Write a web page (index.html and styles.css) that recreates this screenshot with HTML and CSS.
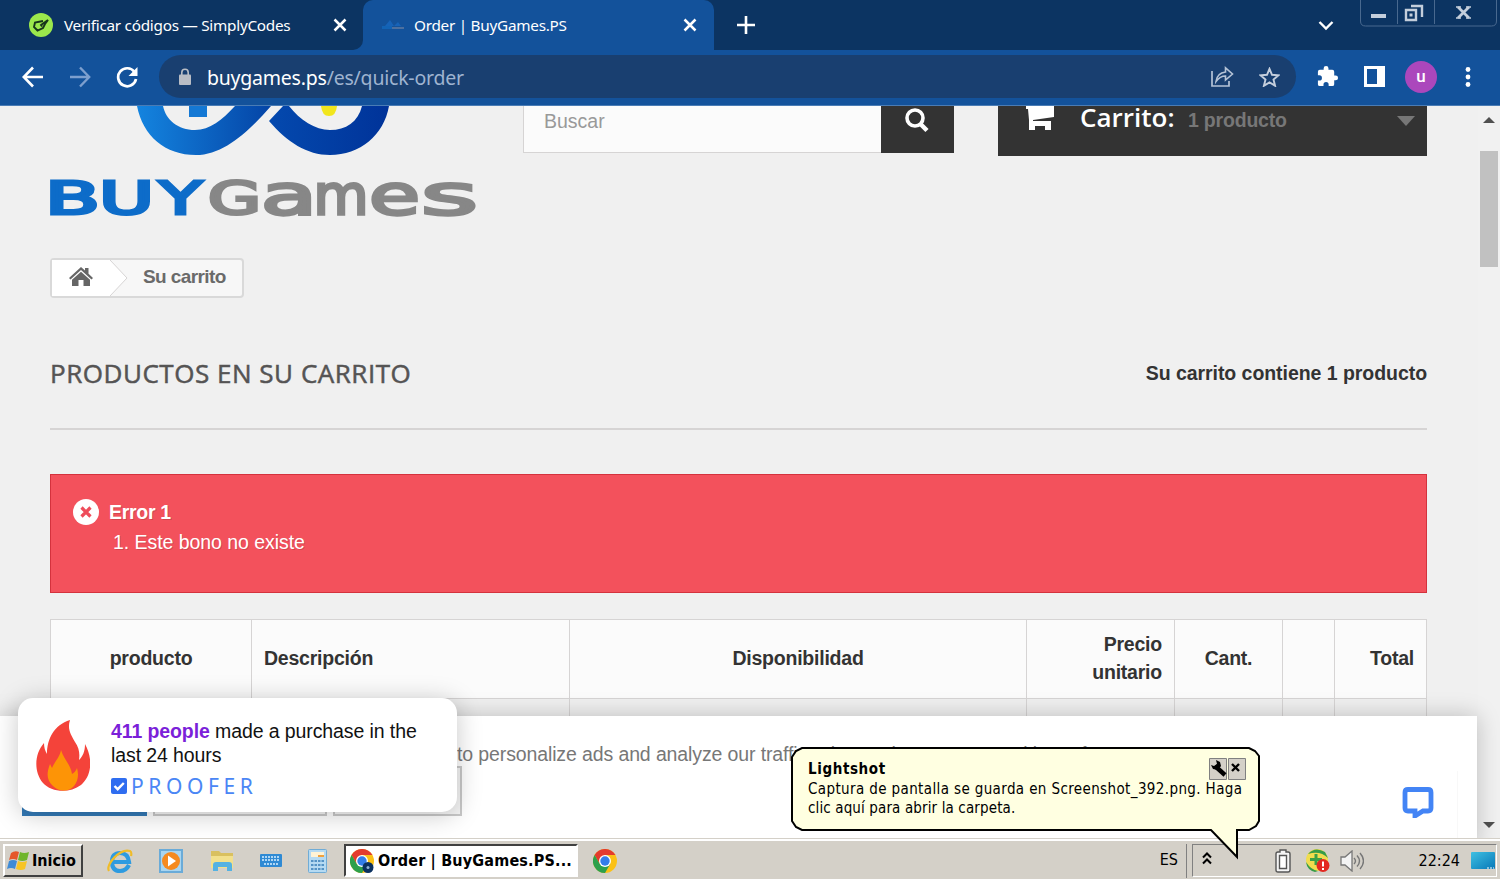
FILE: index.html
```
<!DOCTYPE html>
<html lang="es">
  <head>
    <meta charset="UTF-8" />
    <title>Order | BuyGames.PS</title>
    <link rel="stylesheet" href="styles.css">
  </head>
  <body>
    <div class="tabs">
      <div class="tab">
        <svg class="fav" width="24" height="24" viewBox="0 0 24 24"><circle cx="12" cy="12" r="12" fill="#9be84c"/><path d="M14 8 6 9.500 5 14l3.500 3.500L14 15l2-4 3-4-7 5 1 1.500" fill="none" stroke="#17351b" stroke-width="1.900"/></svg>
        <span class="tab-title t1">Verificar códigos — SimplyCodes</span>
        <svg class="x" width="14" height="14" viewBox="0 0 14 14"><path d="m1.500 1.500 11 11M12.500 1.500l-11 11" stroke="#fff" stroke-width="2.500"/></svg>
      </div>
      <div class="tab active">
        <svg class="fav" width="24" height="14" viewBox="0 0 24 14"><path d="m4 8 5-6 4 6 4-4 3 4z" fill="#1763b8"/><path d="M1 8h10v3H1z" fill="#1263b5"/><path d="M11 9h12v2H11z" fill="#4d709f"/></svg>
        <span class="tab-title t2">Order | BuyGames.PS</span>
        <svg class="x" width="14" height="14" viewBox="0 0 14 14"><path d="m1.500 1.500 11 11M12.500 1.500l-11 11" stroke="#fff" stroke-width="2.500"/></svg>
      </div>
      <svg class="plus" width="18" height="18" viewBox="0 0 18 18"><path d="M9 0v18M0 9h18" stroke="#fff" stroke-width="2.600"/></svg>
      <svg class="chev" width="16" height="12" viewBox="0 0 16 12"><path d="m1.500 3 6.500 6.500L14.500 3" fill="none" stroke="#fff" stroke-width="2.400"/></svg>
      <svg class="winbtns" width="137" height="27" viewBox="0 0 137 27">
        <path d="M.5 0v21q0 5 5 5h126q5 0 5-5V0M37.500 0v24M74.500 0v24" fill="none" stroke="#49698f"/>
        <path d="M11 14h15v4H11z" fill="#c4cedb"/>
        <path d="M51 6h11v11M46 10h10v10H46z" fill="none" stroke="#c4cedb" stroke-width="2.400"/><path d="M49.500 13.500h3v3h-3z" fill="#c4cedb"/>
        <path d="m98 7 11 11M109 7 98 18" stroke="#c4cedb" stroke-width="2.800"/><path d="M96 7h5M106 7h5M96 18h5M106 18h5" stroke="#c4cedb" stroke-width="1.500"/>
      </svg>
    </div>

    <div class="toolbar">
      <svg width="22" height="22" viewBox="0 0 22 22"><path d="M21 11H2M11 1.500 1.800 11l9.200 9.500" fill="none" stroke="#fff" stroke-width="2.600"/></svg>
      <svg class="fwd" width="22" height="22" viewBox="0 0 22 22"><path d="M1 11h19M11 1.500 20.200 11 11 20.500" fill="none" stroke="#7d9fce" stroke-width="2.400"/></svg>
      <svg class="reload" width="22" height="22" viewBox="0 0 22 22"><path d="M18.500 6A9 9 0 1 0 20 13" fill="none" stroke="#fff" stroke-width="2.700"/><path d="M21.500 1v9h-9z" fill="#fff"/></svg>
      <div class="omnibox">
        <svg width="12" height="18" viewBox="0 0 12 18"><path d="M2.800 8V4.500a3.200 3.200 0 0 1 6.400 0V8" fill="none" stroke="#b9bdc5" stroke-width="1.600"/><rect y="6.500" width="12" height="10.500" rx="1" fill="#b9bdc5"/></svg>
        <span class="url">buygames.ps<i>/es/quick-order</i></span>
        <svg class="share" width="23" height="21" viewBox="0 0 23 21"><path d="M1 5v15h17v-5" fill="none" stroke="#b5c3d6" stroke-width="1.700"/><path d="M5 15.500q1-8.500 9.500-9.500V1.800l7 6.200-7 6v-4Q9 10 5 15.500z" fill="none" stroke="#b5c3d6" stroke-width="1.600"/></svg>
        <svg width="21" height="20" viewBox="0 0 21 20"><path d="m10.500 1.800 2.500 6 6.500.5-5 4.200 1.600 6.300-5.600-3.400-5.600 3.400 1.600-6.300-5-4.200 6.500-.5z" fill="none" stroke="#c5cfdd" stroke-width="1.900"/></svg>
      </div>
      <svg class="puzzle" width="23" height="23" viewBox="0 0 24 24"><path d="M20.500 11H19V7a2 2 0 0 0-2-2h-4V3.500a2.500 2.500 0 0 0-5 0V5H4a2 2 0 0 0-2 2v3.800h1.500a2.700 2.700 0 0 1 0 5.400H2V20a2 2 0 0 0 2 2h3.800v-1.500a2.700 2.700 0 0 1 5.400 0V22H17a2 2 0 0 0 2-2v-4h1.500a2.500 2.500 0 0 0 0-5z" fill="#fff"/></svg>
      <svg class="panel" width="21" height="21" viewBox="0 0 21 21"><path d="M1.500 1.500h18v18h-18z" fill="none" stroke="#fff" stroke-width="3"/><path d="M13 2h7v17h-7z" fill="#fff"/></svg>
      <span class="avatar">u</span>
      <svg class="dots" width="6" height="20" viewBox="0 0 6 20"><circle cx="3" cy="2.500" r="2.400" fill="#fff"/><circle cx="3" cy="10" r="2.400" fill="#fff"/><circle cx="3" cy="17.500" r="2.400" fill="#fff"/></svg>
    </div>

    <div class="view">
      <div class="page">
        <div class="header">
          <svg class="logo" width="426" height="112" viewBox="0 0 426 112">
            <defs>
              <linearGradient id="g1" x1="0" y1="0" x2="1" y2="0"><stop offset="0" stop-color="#1484df"/><stop offset="1" stop-color="#0444a6"/></linearGradient>
              <linearGradient id="g2" x1="0" y1="0" x2="1" y2="0"><stop offset="0" stop-color="#0449ae"/><stop offset="1" stop-color="#003399"/></linearGradient>
            </defs>
            <path d="M87 0C93 30 115 49 146 49C174 49 200 24 221 0H185C172 14 160 24 145 24C128 24 116 14 113 0z" fill="url(#g1)"/>
            <path d="M233 0 219 15C237 36 257 49 280 49C310 49 334 29 339 0H312C308 16 296 24 280 24C265 24 250 14 239 0z" fill="url(#g2)"/>
            <path d="M139 0h18v11h-18z" fill="#1478d4"/>
            <path d="M271 0h16q-1 10-8 10t-8-10z" fill="#f2e61c"/>
            <g class="wm blue">
              <text x="-5" y="107.500" textLength="55" lengthAdjust="spacingAndGlyphs">B</text>
              <text x="49" y="107.500" textLength="55" lengthAdjust="spacingAndGlyphs">U</text>
              <text x="109" y="107.500" textLength="43" lengthAdjust="spacingAndGlyphs">Y</text>
            </g>
            <g class="wm grey">
              <text x="158" y="107.500" textLength="53" lengthAdjust="spacingAndGlyphs">G</text>
              <text class="low" x="211" y="107.500" textLength="56" lengthAdjust="spacingAndGlyphs">a</text>
              <text class="low" x="263.500" y="107.500" textLength="55" lengthAdjust="spacingAndGlyphs">m</text>
              <text class="low" x="319" y="107.500" textLength="51" lengthAdjust="spacingAndGlyphs">e</text>
              <text class="low" x="371" y="107.500" textLength="57" lengthAdjust="spacingAndGlyphs">s</text>
            </g>
          </svg>
          <div class="search">
            <span>Buscar</span>
            <div class="search-btn"><svg width="26" height="26" viewBox="0 0 26 26"><circle cx="11" cy="10" r="8" fill="none" stroke="#fff" stroke-width="3.600"/><path d="m16.500 16 6.500 6.500" stroke="#fff" stroke-width="4.500"/></svg></div>
          </div>
          <div class="cart">
            <svg width="28" height="25" viewBox="0 0 28 25"><path d="M0 0h28v11L7 14v1h18v9h-6v-4H9v4H3V14L2 3H0z" fill="#fff"/></svg>
            <b>Carrito:</b>
            <span>1 producto</span>
            <svg class="caret" width="18" height="10" viewBox="0 0 18 10"><path d="M0 0h18L9 10z" fill="#777"/></svg>
          </div>
        </div>

        <div class="crumbs">
          <div class="home"><svg width="24" height="20" viewBox="0 0 24 20"><path d="M12 0 0 11l1.500 1.500L12 3l10.500 9.500L24 11l-4.500-4.300V1H16v2.500z" fill="#666"/><path d="m12 4.800-9 8V19h6.500v-6h5v6H21v-6.200z" fill="#666"/></svg></div>
          <svg class="arrow" width="18" height="36" viewBox="0 0 18 36"><path d="M0 0 17 18 0 36z" fill="#fff"/><path d="m0 0 17 18L0 36" fill="none" stroke="#d6d4d4"/></svg>
          <span>Su carrito</span>
        </div>

        <div class="heading">
          <h1>PRODUCTOS EN SU CARRITO</h1>
          <span>Su carrito contiene 1 producto</span>
        </div>

        <div class="alert">
          <svg width="26" height="26" viewBox="0 0 26 26"><circle cx="13" cy="13" r="13" fill="#fff"/><path d="m8.500 8.500 9 9M17.500 8.500l-9 9" stroke="#ee4d5b" stroke-width="3.200"/></svg>
          <div>
            <p class="err">Error 1</p>
            <p class="item">1. Este bono no existe</p>
          </div>
        </div>

        <table class="products">
          <colgroup><col class="c1"><col class="c2"><col class="c3"><col class="c4"><col class="c5"><col class="c6"><col class="c7"></colgroup>
          <tr>
            <th>producto</th><th class="left">Descripción</th><th>Disponibilidad</th><th class="right">Precio unitario</th><th class="cant">Cant.</th><th></th><th class="right">Total</th>
          </tr>
          <tr class="row"><td></td><td></td><td></td><td></td><td></td><td></td><td></td></tr>
        </table>
      </div>

      <div class="scroll">
        <svg width="12" height="6" viewBox="0 0 12 6"><path d="M0 6h12L6 0z" fill="#505050"/></svg>
        <div class="thumb"></div>
        <svg class="down" width="12" height="6" viewBox="0 0 12 6"><path d="M0 0h12L6 6z" fill="#505050"/></svg>
      </div>

      <div class="cookies">
        <p>to personalize ads and analyze our traffic. Please choose your cookie preferences.</p>
        <div class="btns"><div class="accept"></div><div class="decline"></div><div class="more"></div></div>
      </div>

      <div class="proof">
        <svg width="54" height="71" viewBox="0 0 54 71"><path d="M34 0c-3 9 1 15 5 22 4 6 5 11 4 18 4-4 6-9 6-16 8 14 7 32-4 41-12 9-30 7-38-2C-3 51-1 33 8 23c0 4 1 8 3 11C11 19 18 5 34 0z" fill="#f4433a"/><path d="M25 30c-1 7-6 11-9 18l-2-4c-4 10-3 17 3 22 6 6 16 6 21 0 4-5 5-11 3-18-1 3-3 5-5 6-1-9-8-14-11-24z" fill="#fd9406"/></svg>
        <div class="proof-text">
          <p><b>411 people</b> made a purchase in the<br>last 24 hours</p>
          <div class="brand"><svg width="16" height="16" viewBox="0 0 16 16"><rect width="16" height="16" rx="2" fill="#2f6df0"/><path d="m3.500 8 3.200 3.200L12.800 5" fill="none" stroke="#fff" stroke-width="2.400"/></svg><span>PROOFER</span></div>
        </div>
      </div>

      <div class="chat">
        <svg width="32" height="31" viewBox="0 0 32 31"><path d="M6 2.500h20q3 0 3 3V21q0 3-3 3h-5l-8 5v-5H6q-3 0-3-3V5.500q0-3 3-3z" fill="none" stroke="#4384f5" stroke-width="4.800"/></svg>
      </div>
    </div>

    <div class="taskbar">
      <div class="start">
        <svg width="23" height="21" viewBox="0 0 23 21"><path d="M4 3q4-3 8-1l-2 8q-4-2-8 0z" fill="#e5572b"/><path d="M13 2q4 2 9 0l-2 8q-5 2-9 0z" fill="#6fb52c"/><path d="M2 11q4-2 8 0l-2 8q-4-2-8 0z" fill="#3f8bd6"/><path d="M11 11q4 2 9 0l-2 8q-4 2-9 0z" fill="#f7c426"/></svg>
        <b>Inicio</b>
      </div>
      <div class="quick">
        <svg width="26" height="26" viewBox="0 0 26 26"><path d="M22 17q-3 6-9 6-8 0-8-9t8-9 9 9H7" fill="none" stroke="#2e9be0" stroke-width="4.200"/><path d="M2 23C-2 17 13 0 23 3q2 1 1 5" fill="none" stroke="#f0bc28" stroke-width="2.200"/></svg>
        <svg width="24" height="24" viewBox="0 0 24 24"><rect x="1" y="1" width="22" height="22" fill="#a9d5f0" stroke="#6aabd8" stroke-width="2"/><circle cx="12" cy="12" r="9" fill="#f58a1f"/><path d="m9 6.500 8 5.500-8 5.500z" fill="#fff"/></svg>
        <svg width="24" height="22" viewBox="0 0 24 22"><path d="M1 3V1h8l2 2h12v15H1z" fill="#d9c05f"/><path d="M1 6h22v12H1z" fill="#f2e08c"/><path d="M3 21v-6q0-3 3-3h13q3 0 3 3v6h-5v-4H8v4z" fill="#55b2e2"/></svg>
        <svg width="22" height="13" viewBox="0 0 22 13"><rect width="22" height="13" rx="1" fill="#2f8ad4"/><path d="M2 3h18M2 6h18M4 10h14" stroke="#d9efff" stroke-width="1.600" stroke-dasharray="2 1"/></svg>
        <svg width="19" height="24" viewBox="0 0 19 24"><rect x=".5" y=".5" width="18" height="23" rx="1" fill="#b5daf2" stroke="#70acd6"/><path d="M3 3h13v5H3z" fill="#fff3d5"/><path d="M10 7h6" stroke="#f0a13c" stroke-width="2"/><path d="M3 12h13M3 16h13M3 20h13" stroke="#5493c5" stroke-width="2.200" stroke-dasharray="2.500 1"/></svg>
      </div>
      <div class="task">
        <svg width="24" height="24" viewBox="0 0 24 24"><circle cx="12" cy="12" r="12" fill="#fbc116"/><path d="M1.600 6A12 12 0 0 1 22.400 6H12l-5.200 9z" fill="#e33b2e"/><path d="M1.600 6A12 12 0 0 0 12 24l5.200-9H6.800z" fill="#2da04c"/><circle cx="12" cy="12" r="6" fill="#fff"/><circle cx="12" cy="12" r="4.700" fill="#337de9"/><circle cx="18" cy="18.500" r="5.500" fill="#0b3160"/><circle cx="18" cy="18.500" r="1.500" fill="#8fb0d5"/></svg>
        <b>Order | BuyGames.PS...</b>
      </div>
      <svg width="24" height="24" viewBox="0 0 24 24"><circle cx="12" cy="12" r="12" fill="#fbc116"/><path d="M1.600 6A12 12 0 0 1 22.400 6H12l-5.200 9z" fill="#e33b2e"/><path d="M1.600 6A12 12 0 0 0 12 24l5.200-9H6.800z" fill="#2da04c"/><circle cx="12" cy="12" r="6" fill="#fff"/><circle cx="12" cy="12" r="4.700" fill="#337de9"/></svg>
      <span class="lang">ES</span>
      <div class="tray">
        <svg class="up" width="10" height="13" viewBox="0 0 10 13"><path d="m1 5.500 4-4 4 4M1 11.500l4-4 4 4" fill="none" stroke="#000" stroke-width="2"/></svg>
        <svg class="bat" width="16" height="24" viewBox="0 0 16 24"><path d="M5 3V1h6v2h2q2 0 2 2v16q0 2-2 2H3q-2 0-2-2V5q0-2 2-2z" fill="#f4f4f4" stroke="#555" stroke-width="1.400"/><path d="M4.500 6.500h7v13h-7z" fill="#fff" stroke="#555" stroke-width="1.400"/></svg>
        <svg class="shield" width="25" height="25" viewBox="0 0 25 25"><circle cx="12" cy="12" r="11" fill="#f1dc4e"/><path d="M3 6Q10-2 20 4l3 6Q15 2 3 6zM1 14q5 8 12 9l-3 1Q2 22 1 14z" fill="#369c48"/><path d="M11 6v11M5 11.500h12" stroke="#3aa045" stroke-width="3"/><circle cx="18" cy="17.500" r="6.500" fill="#e32821"/><path d="M18 13.500v5M18 20v2" stroke="#fff" stroke-width="2"/></svg>
        <svg class="vol" width="24" height="22" viewBox="0 0 24 22"><path d="M1 7h4l7-6v20l-7-6H1z" fill="#f3f3f3" stroke="#777" stroke-width="1.300"/><path d="M14 8q3 3 0 6M17 5.500q5 5.500 0 11M20 3q7 8 0 16" fill="none" stroke="#777" stroke-width="1.400"/></svg>
        <span class="clock">22:24</span>
        <svg width="24" height="18" viewBox="0 0 24 18"><defs><linearGradient id="g3" x1="0" y1="0" x2="1" y2="1"><stop offset="0" stop-color="#3fc0e2"/><stop offset="1" stop-color="#0878b8"/></linearGradient></defs><rect width="24" height="17" rx="1" fill="url(#g3)"/><path d="M16 16h7" stroke="#fff" stroke-dasharray="2 1"/></svg>
      </div>
    </div>

    <div class="balloon">
      <svg class="bubble" width="470" height="113" viewBox="0 0 470 113"><path d="M11 1h447l6 3 4 5v65l-3 5-7 4h-12v27L420 83H11l-6-3-4-6V10l4-6z" fill="#ffffe1" stroke="#000" stroke-width="2"/></svg>
      <div class="balloon-body">
        <div class="balloon-head">
          <b>Lightshot</b>
          <svg width="18" height="22" viewBox="0 0 18 22"><path d="M.5.5h17v21H.5z" fill="#d4d0c8" stroke="#808080"/><path d="m6 8 10 9" stroke="#000" stroke-width="4.400"/><path d="m2 7 2 4 5 1 3-4-1-4-4-2 1 4-3 2z" fill="#000"/></svg>
          <svg width="18" height="22" viewBox="0 0 18 22"><path d="M.5.5h17v21H.5z" fill="#d4d0c8" stroke="#808080"/><path d="m4 6 7 7M11 6l-7 7" stroke="#000" stroke-width="2.400"/></svg>
        </div>
        <p class="b1">Captura de pantalla se guarda en Screenshot_392.png. Haga</p>
        <p class="b2">clic aquí para abrir la carpeta.</p>
      </div>
    </div>
  </body>
</html>
```
FILE: styles.css
```
* {
  box-sizing: border-box;
}
body {
  margin: 0;
  width: 1500px;
  height: 879px;
  overflow: hidden;
  position: relative;
  display: flex;
  flex-direction: column;
  font-family: "Liberation Sans", Arial, sans-serif;
  background: #f0f0f0;
}
p, h1 {
  margin: 0;
}
svg {
  display: block;
  flex: none;
}
span, b, p, h1 {
  white-space: nowrap;
}

/* browser chrome */
.tabs {
  height: 50px;
  display: flex;
  align-items: center;
  background: #0c3462;
  flex: none;
  font-family: "Noto Sans", sans-serif;
}
.tab {
  width: 363px;
  height: 50px;
  display: flex;
  align-items: center;
  padding: 0 16px 0 29px;
  color: #fff;
  font-size: 15.300px;
  letter-spacing: -.26px;
}
.tab:first-child {
  background: #0c3462;
  border-radius: 0 0 10px 0;
  box-shadow: 12px 12px #13529b;
  clip-path: inset(0 -12px 0 0);
}
.tab.active {
  width: 351px;
  padding: 0 17px 0 18px;
  background: #13529b;
  border-radius: 10px 10px 0 0;
  position: relative;
}
.tab-title {
  margin-left: 11px;
  flex: 1;
}
.active .tab-title {
  margin-left: 9px;
}
.plus {
  margin-left: 23px;
}
.chev {
  margin-left: auto;
}
.winbtns {
  margin-left: 26px;
  margin-right: 3px;
  align-self: flex-start;
}
.toolbar {
  height: 56px;
  flex: none;
  display: flex;
  align-items: center;
  padding: 0 28px 2px 22px;
  background: #13529b;
  border-bottom: 1px solid #4a7cb5;
}
.fwd {
  margin-left: 25px;
}
.reload {
  margin-left: 25px;
}
.omnibox {
  width: 1137px;
  height: 43px;
  margin-left: 21px;
  padding: 0 16px 0 20px;
  border-radius: 22px;
  background: #193f70;
  display: flex;
  align-items: center;
}
.url {
  flex: 1;
  margin: 1px 0 0 16px;
  font: 19.500px "Noto Sans", sans-serif;
  letter-spacing: -.22px;
  color: #fff;
}
.url i {
  font-style: normal;
  color: #9fb4d0;
}
.share {
  margin-right: 25px;
}
.puzzle {
  margin-left: 20px;
}
.panel {
  margin-left: 25px;
}
.avatar {
  width: 32px;
  height: 32px;
  margin-left: 20px;
  border-radius: 50%;
  background: #ab47bc;
  color: #fff;
  text-align: center;
  font: 500 17px/30px Roboto, sans-serif;
}
.dots {
  margin-left: 28px;
}

/* page */
.view {
  flex: 1;
  position: relative;
  display: flex;
  overflow: hidden;
}
.page {
  width: 1478px;
  flex: none;
  padding: 0 51px 0 50px;
}
.header {
  display: flex;
  align-items: flex-start;
}
.logo {
  overflow: visible;
}
.wm {
  font-family: "DejaVu Sans", sans-serif;
  font-size: 44px;
  stroke-width: 3;
}
.wm .low {
  font-size: 56px;
}
.blue {
  fill: #0d6cc9;
  stroke: #0d6cc9;
}
.grey {
  fill: #878787;
  stroke: #878787;
}
.search {
  width: 431px;
  height: 47px;
  margin-left: 47px;
  display: flex;
  justify-content: space-between;
  background: #fbfbfb;
  border: 1px solid #d6d4d4;
  border-top: 0;
}
.search span {
  padding-left: 20px;
  font-size: 19.500px;
  line-height: 31px;
  color: #999;
}
.search-btn {
  width: 73px;
  height: 47px;
  margin-right: -1px;
  padding: 2px 0 0 23px;
  background: #333;
}
.cart {
  width: 429px;
  height: 50px;
  margin-left: 44px;
  display: flex;
  background: #333;
  padding: 0 12px 0 28px;
}
.cart b {
  margin-left: 26px;
  width: 96px;
  color: #fff;
  font: 600 26px/23px "Open Sans", sans-serif;
}
.cart span {
  margin-left: 12px;
  color: #777;
  font-size: 19.500px;
  letter-spacing: -.2px;
  font-weight: bold;
  line-height: 28px;
}
.caret {
  margin: 10px 0 0 auto;
}
.crumbs {
  width: 194px;
  height: 40px;
  margin-top: 40px;
  display: flex;
  border: 2px solid #d9d9d9;
  border-radius: 4px;
  background: #f7f7f7;
}
.home {
  width: 58px;
  padding: 7px 0 0 17px;
  background: #fff;
}
.crumbs span {
  margin-left: 15px;
  font-size: 19px;
  letter-spacing: -.6px;
  font-weight: bold;
  line-height: 34px;
  color: #6a6a6a;
}
.heading {
  height: 132px;
  padding-top: 20px;
  display: flex;
  align-items: center;
  justify-content: space-between;
  border-bottom: 2px solid #d6d4d4;
}
.heading h1 {
  font: 500 26px "Open Sans", sans-serif;
  letter-spacing: .53px;
  color: #555454;
  -webkit-text-stroke: .5px #555454;
}
.heading span {
  font-size: 19.500px;
  letter-spacing: -.05px;
  font-weight: bold;
  color: #333;
}
.alert {
  height: 119px;
  margin-top: 44px;
  padding: 24px 0 0 22px;
  display: flex;
  background: #f3515c;
  border: 1px solid #d4323d;
  color: #fff;
  font-size: 19.500px;
  line-height: 30px;
  letter-spacing: -.05px;
  text-shadow: 1px 1px rgba(0, 0, 0, .15);
}
.alert div {
  margin: -2px 0 0 10px;
}
.err {
  font-weight: bold;
  letter-spacing: -.3px;
}
.item {
  margin-left: 4px;
}
.products {
  width: 1376px;
  margin-top: 26px;
  table-layout: fixed;
  border-collapse: collapse;
  font-size: 19.500px;
  line-height: 28px;
  letter-spacing: -.22px;
  color: #333;
}
.c1 { width: 201px; }
.c2 { width: 318px; }
.c3 { width: 457px; }
.c4 { width: 148px; }
.c5 { width: 108px; }
.c6 { width: 52px; }
.c7 { width: 92px; }
.products th {
  height: 79px;
  padding: 0 12px;
  background: #fbfbfb;
  border: 1px solid #d6d4d4;
  padding-bottom: 3px;
}
.products .left {
  text-align: left;
}
.products .right {
  text-align: right;
}
.products td {
  height: 120px;
  border: 1px solid #d6d4d4;
}
.scroll {
  width: 22px;
  padding: 11px 2px 0;
  display: flex;
  flex-direction: column;
  background: #f1f1f1;
}
.scroll svg {
  margin-left: 3px;
}
.thumb {
  width: 18px;
  height: 116px;
  margin-top: 28px;
  background: #c1c1c1;
}
.scroll .down {
  margin-top: auto;
  margin-bottom: 10px;
}

/* bars and popups over the page */
.cookies {
  position: absolute;
  left: 0;
  top: 610px;
  width: 1477px;
  height: 130px;
  padding: 26px 0 0 22px;
  background: #fff;
  box-shadow: 0 0 22px rgba(0, 0, 0, .22);
  color: #777;
  font-size: 19.500px;
  line-height: 24px;
  letter-spacing: -.12px;
}
.cookies p {
  margin-left: 435px;
}
.btns {
  display: flex;
  gap: 6px;
}
.btns div {
  height: 50px;
  background: #f5f5f5;
  border: 2px solid #c9c9c9;
}
.btns .accept {
  width: 125px;
  background: #337ab7;
  border-color: #337ab7;
}
.btns .decline {
  width: 174px;
}
.btns .more {
  width: 129px;
}
.proof {
  position: absolute;
  left: 18px;
  top: 592px;
  width: 439px;
  height: 114px;
  padding: 22px 0 0 18px;
  display: flex;
  border-radius: 15px;
  background: #fff;
  box-shadow: 0 3px 26px rgba(0, 0, 0, .22);
}
.proof-text {
  font-size: 19.500px;
  line-height: 23.500px;
  letter-spacing: -.1px;
  margin: 0 0 0 21px;
  color: #111;
}
.proof b {
  color: #7b1fd9;
}
.brand {
  margin-top: 9px;
  display: flex;
  align-items: center;
  gap: 4px;
  color: #4a86f5;
  font: 21px/20px "Noto Sans", sans-serif;
  letter-spacing: 4.600px;
}
.chat {
  position: absolute;
  left: 1380px;
  top: 665px;
  width: 78px;
  height: 70px;
  padding: 16px 0 0 22px;
  border-right: 1px solid #f8f8f8;
}

/* windows taskbar */
.taskbar {
  height: 41px;
  flex: none;
  display: flex;
  align-items: center;
  padding: 3px 0 0 3px;
  background: #d4d0c8;
  border-top: 1px solid #d4d0c8;
  box-shadow: inset 0 2px #fff;
  font-family: "DejaVu Sans Condensed", "DejaVu Sans", sans-serif;
  font-size: 16px;
  color: #000;
}
.start {
  width: 80px;
  height: 33px;
  padding-left: 2px;
  display: flex;
  align-items: center;
  gap: 2px;
  border: 2px solid;
  border-color: #fff #404040 #404040 #fff;
}
.quick {
  width: 220px;
  margin-left: 24px;
  display: flex;
  align-items: center;
  justify-content: space-between;
}
.task {
  width: 234px;
  height: 33px;
  margin: 0 15px 0 17px;
  padding-left: 4px;
  display: flex;
  align-items: center;
  gap: 4px;
  border: 2px solid;
  border-color: #404040 #fff #fff #404040;
  background: #fff;
  letter-spacing: .18px;
}
.lang {
  margin-left: auto;
  padding-right: 8px;
  height: 34px;
  line-height: 32px;
  border-right: 1px solid #808080;
}
.tray {
  width: 305px;
  height: 33px;
  margin: 0 3px 0 5px;
  padding: 0 1px 0 9px;
  display: flex;
  align-items: center;
  border: 1px solid;
  border-color: #808080 #fff #fff #808080;
}
.up {
  margin-bottom: 5px;
}
.bat {
  margin-left: 63px;
}
.shield {
  margin-left: 14px;
}
.vol {
  margin-left: 10px;
}
.clock {
  margin-left: auto;
  margin-right: 11px;
}

.balloon {
  position: absolute;
  left: 791px;
  top: 747px;
  width: 470px;
  height: 113px;
}
.bubble {
  position: absolute;
  left: 0;
  top: 0;
}
.balloon-body {
  position: relative;
  padding: 11px 15px 0 17px;
  font-family: "DejaVu Sans Condensed", "DejaVu Sans", sans-serif;
  font-size: 15px;
  line-height: 19px;
  color: #000;
}
.balloon-head {
  height: 22px;
  display: flex;
  gap: 1px;
}
.balloon-head b {
  flex: 1;
  line-height: 22px;
  letter-spacing: .6px;
}
.b1 {
  letter-spacing: .38px;
}
.b2 {
  letter-spacing: .13px;
}
```
